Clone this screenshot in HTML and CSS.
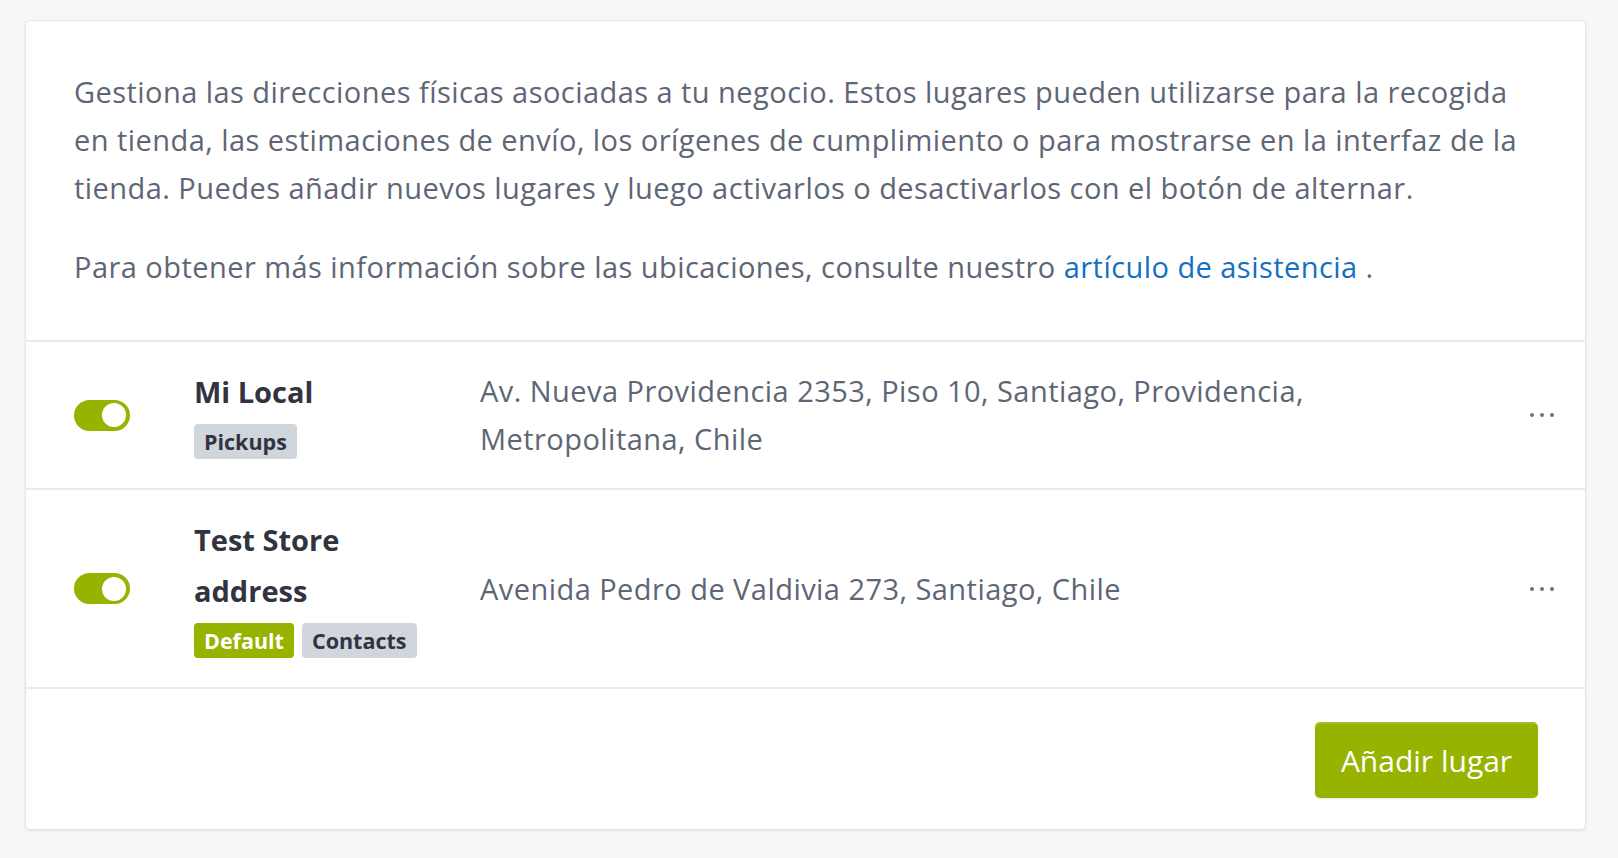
FILE: index.html
```html
<!DOCTYPE html>
<html lang="es">
<head>
<meta charset="utf-8">
<title>Ubicaciones</title>
<link rel="stylesheet" href="styles.css">
</head>
<body>
<div class="card">
  <div class="intro">
    <p class="intro-text">Gestiona las direcciones físicas asociadas a tu negocio. Estos lugares pueden utilizarse para la recogida en tienda, las estimaciones de envío, los orígenes de cumplimiento o para mostrarse en la interfaz de la tienda. Puedes añadir nuevos lugares y luego activarlos o desactivarlos con el botón de alternar.</p>
    <p class="intro-text">Para obtener más información sobre las ubicaciones, consulte nuestro <a class="link" href="#">artículo de asistencia</a> .</p>
  </div>
  <ul class="locations">
    <li class="location">
      <span class="toggle"><span class="knob"></span></span>
      <div class="name-col">
        <div class="name">Mi Local</div>
        <div class="tags"><span class="tag">Pickups</span></div>
      </div>
      <div class="address">Av. Nueva Providencia 2353, Piso 10, Santiago, Providencia, Metropolitana, Chile</div>
      <button class="more" type="button" aria-label="Más acciones">
        <svg width="24" height="6" viewBox="0 0 24 6"><circle cx="2" cy="3" r="2"/><circle cx="12" cy="3" r="2"/><circle cx="22" cy="3" r="2"/></svg>
      </button>
    </li>
    <li class="location">
      <span class="toggle"><span class="knob"></span></span>
      <div class="name-col">
        <div class="name">Test Store address</div>
        <div class="tags"><span class="tag tag-green">Default</span><span class="tag">Contacts</span></div>
      </div>
      <div class="address">Avenida Pedro de Valdivia 273, Santiago, Chile</div>
      <button class="more" type="button" aria-label="Más acciones">
        <svg width="24" height="6" viewBox="0 0 24 6"><circle cx="2" cy="3" r="2"/><circle cx="12" cy="3" r="2"/><circle cx="22" cy="3" r="2"/></svg>
      </button>
    </li>
  </ul>
  <div class="footer">
    <button class="btn-primary" type="button">Añadir lugar</button>
  </div>
</div>
</body>
</html>
```
FILE: styles.css
```css
* { box-sizing: border-box; }
html, body { margin: 0; padding: 0; }
body {
  background: #f6f7f9;
  font-family: "Open Sans", Lato, Arial, sans-serif;
  color: #5e6675;
  padding: 20px 32px 30px 25px;
}
.card {
  background: #fff;
  border: 1px solid #e3e5e9;
  border-radius: 5px;
  box-shadow: 0 1px 3px rgba(0,0,0,0.08);
}
.intro {
  padding: 47px 48px 49px 48px;
}
.intro-text {
  margin: 0 0 31px 0;
  font-size: 29px;
  letter-spacing: 0.45px;
  line-height: 48px;
  color: #5e6675;
}
.intro-text:last-child { margin-bottom: 0; }
.link { color: #1470c2; text-decoration: none; }

.locations { list-style: none; margin: 0; padding: 0; }
.location {
  display: flex;
  align-items: center;
  border-top: 2px solid #e9eaee;
  padding: 24px 24px 24px 48px;
}
.toggle {
  flex: none;
  width: 56px;
  height: 31px;
  border-radius: 16px;
  background: #97b300;
  display: flex;
  align-items: center;
  justify-content: flex-end;
  padding-right: 4px;
}
.knob {
  width: 24px;
  height: 24px;
  border-radius: 50%;
  background: #fff;
}
.name-col {
  flex: none;
  width: 240px;
  margin-left: 64px;
  padding-bottom: 5px;
}
.name {
  font-size: 29px;
  line-height: 51px;
  font-weight: 700;
  color: #313440;
}
.tags { display: flex; gap: 8px; margin-top: 7px; }
.tag {
  display: inline-block;
  height: 35px;
  line-height: 35px;
  padding: 0 10px;
  border-radius: 4px;
  background: #d1d5dc;
  color: #313440;
  font-size: 21.5px;
  font-weight: 700;
}
.tag-green { background: #97b300; color: #fff; }
.address {
  flex: none;
  width: 860px;
  margin-left: 46px;
  font-size: 29px;
  letter-spacing: 0.45px;
  line-height: 48px;
  color: #5e6675;
}
.more {
  margin-left: auto;
  width: 38px;
  height: 30px;
  border: 0;
  background: transparent;
  padding: 0;
  display: flex;
  align-items: center;
  justify-content: center;
  fill: #6b7280;
}
.footer {
  border-top: 2px solid #e9eaee;
  display: flex;
  justify-content: flex-end;
  padding: 33px 47px 31px 48px;
}
.btn-primary {
  width: 223px;
  height: 76px;
  border: 0;
  border-radius: 5px;
  background: #97b300;
  box-shadow: inset 0 2px 0 rgba(255,255,255,0.15), 0 1px 2px rgba(0,0,0,0.1);
  color: #fff;
  font-family: "Open Sans", Lato, Arial, sans-serif;
  font-size: 30px;
  cursor: pointer;
}
```
